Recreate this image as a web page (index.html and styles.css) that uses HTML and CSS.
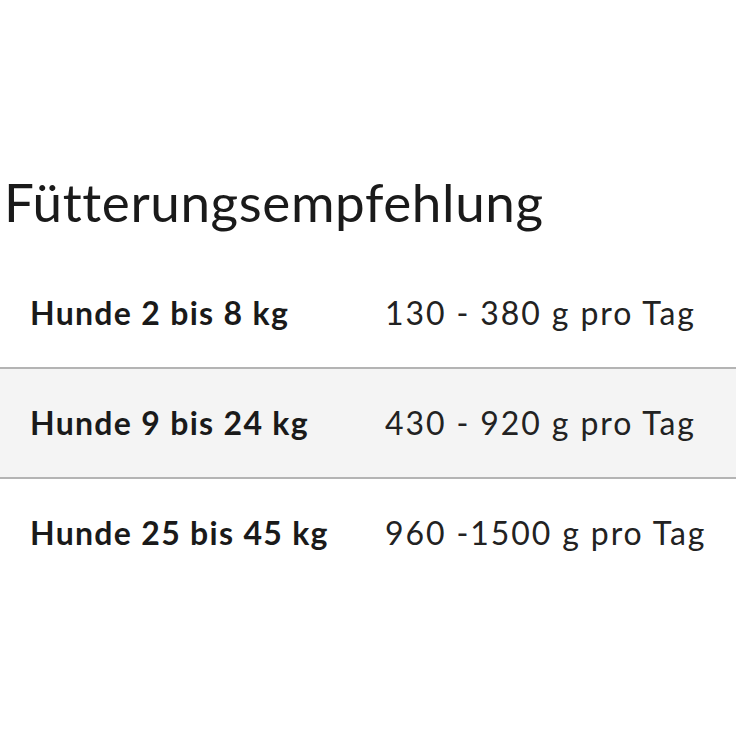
FILE: index.html
```html
<!DOCTYPE html>
<html lang="de">
<head>
<meta charset="utf-8">
<link rel="stylesheet" href="styles.css">
</head>
<body>
<main class="page">
  <h1 class="title">Fütterungsempfehlung</h1>
  <div class="table">
    <div class="row">
      <div class="cell label">Hunde 2 bis 8 kg</div>
      <div class="cell value">130 - 380 g pro Tag</div>
    </div>
    <div class="row alt">
      <div class="cell label">Hunde 9 bis 24 kg</div>
      <div class="cell value">430 - 920 g pro Tag</div>
    </div>
    <div class="row">
      <div class="cell label">Hunde 25 bis 45 kg</div>
      <div class="cell value">960 -1500 g pro Tag</div>
    </div>
  </div>
</main>
</body>
</html>
```

FILE: styles.css
```css
html, body {
  margin: 0;
  padding: 0;
  background: #ffffff;
}
body {
  width: 736px;
  height: 736px;
  font-family: Lato, "Open Sans", sans-serif;
  color: #1a1a1a;
}
.page {
  padding-top: 172px;
}
.title {
  margin: 0 0 0 4px;
  font-size: 53px;
  font-weight: 400;
  line-height: 60px;
  letter-spacing: 0.6px;
}
.table {
  margin-top: 27px;
}
.row {
  display: grid;
  grid-template-columns: 385px 1fr;
  align-items: center;
  height: 108px;
  border-bottom: 2px solid #b4b4b4;
}
.row:last-child {
  border-bottom: none;
}
.row.alt {
  background: #f4f4f4;
}
.cell {
  font-size: 32px;
  line-height: 40px;
}
.label {
  padding-left: 30px;
  font-weight: 700;
  letter-spacing: 1.3px;
}
.value {
  font-weight: 400;
  letter-spacing: 1.9px;
  color: #222222;
}
```
